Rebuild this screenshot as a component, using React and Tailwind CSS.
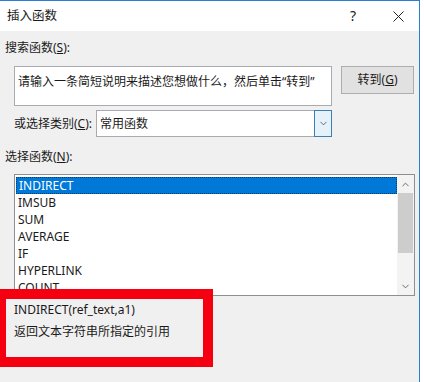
import { ChevronDown, ChevronUp } from 'lucide-react';

const FUNCS = ['INDIRECT', 'IMSUB', 'SUM', 'AVERAGE', 'IF', 'HYPERLINK', 'COUNT'];

export default function App() {
  return (
    <div className="w-[424px] h-[382px] bg-white relative overflow-hidden font-['Noto_Sans','Noto_Sans_CJK_SC',sans-serif] text-[12px] leading-[14px] text-[#1a1a1a]">
      <div className="w-[420px] h-full border-t border-r border-[#2b7ed3] flex flex-col">
        {/* Title bar */}
        <div className="h-[30px] bg-white flex items-center pl-[7px] shrink-0">
          <span className="flex-1 text-[12.5px]">插入函数</span>
          <span className="w-[20px] text-center text-[14px]">?</span>
          <span className="w-[20px] ml-[25px] mr-[11px] flex justify-center">
            <svg width="11" height="11" viewBox="0 0 11 11">
              <path d="M0.5 0.5 L10.5 10.5 M10.5 0.5 L0.5 10.5" stroke="#222" strokeWidth="1" />
            </svg>
          </span>
        </div>

        {/* Body */}
        <div className="flex-1 bg-[#f0f0f0] pl-[5px]">
          <div className="mt-[10px]">
            搜索函数(<span className="underline">S</span>):
          </div>

          <div className="flex mt-[11px]">
            <div className="ml-[9px] w-[318px] h-[40px] border border-[#a9abb0] bg-white px-[3px] pt-[8px]">
              请输入一条简短说明来描述您想做什么，然后单击“转到”
            </div>
            <div className="ml-[9px] w-[73px] h-[28px] bg-[#e1e1e1] border border-[#adadad] flex items-center justify-center">
              转到(<span className="underline">G</span>)
            </div>
          </div>

          <div className="flex items-center mt-[4px]">
            <span className="ml-[9px] w-[82px]">
              或选择类别(<span className="underline">C</span>):
            </span>
            <div className="w-[236px] h-[27px] border border-[#a9abb0] bg-white flex items-stretch">
              <span className="flex-1 pl-[3px] flex items-center">常用函数</span>
              <span className="w-[18px] -my-px -mr-px border border-[#3c7fb1] bg-[#e5f1fb] flex items-center justify-center">
                <ChevronDown size={11} strokeWidth={1.5} color="#333" />
              </span>
            </div>
          </div>

          <div className="mt-[13px]">
            选择函数(<span className="underline">N</span>):
          </div>

          <div className="ml-[9px] mt-[10px] w-[401px] h-[122px] border border-[#8c8f94] bg-white flex overflow-hidden">
            <div className="flex-1 pl-px pt-[2px]">
              {FUNCS.map((f, i) => (
                <div
                  key={f}
                  className={
                    i === 0
                      ? 'h-[17px] pl-[2px] flex items-center bg-[#0078d7] text-white border border-dotted border-[#0b3a6b]'
                      : 'h-[17px] pl-[2px] flex items-center'
                  }
                >
                  {f}
                </div>
              ))}
            </div>
            <div className="w-[17px] bg-[#f3f3f3] flex flex-col items-center">
              <div className="h-[18px] flex items-center justify-center">
                <ChevronUp size={11} strokeWidth={2} color="#606060" />
              </div>
              <div className="w-[15px] h-[60px] bg-[#cdcdcd]" />
              <div className="flex-1" />
              <div className="h-[18px] flex items-center justify-center">
                <ChevronDown size={11} strokeWidth={2} color="#606060" />
              </div>
            </div>
          </div>

          <div className="ml-[9px] mt-[7px]">INDIRECT(ref_text,a1)</div>
          <div className="ml-[9px] mt-[8px]">返回文本字符串所指定的引用</div>
        </div>
      </div>

      {/* Red annotation box */}
      <div className="absolute left-0 top-[289px] w-[213px] h-[78px] border-[10px] border-l-[6px] border-[#f50010]" />
    </div>
  );
}
